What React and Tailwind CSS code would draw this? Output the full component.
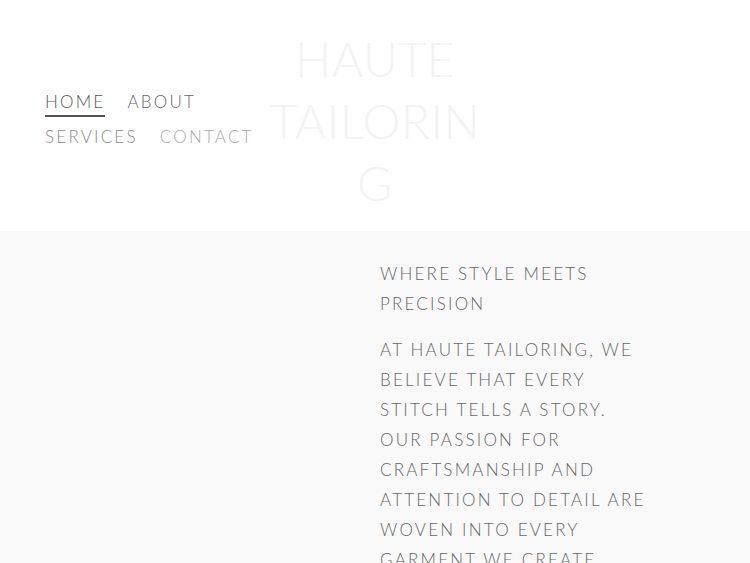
const NAV = [
  { label: 'HOME', color: 'text-[#555]', active: true },
  { label: 'ABOUT', color: 'text-[#666]' },
  { label: 'SERVICES', color: 'text-[#8a8a8a]' },
  { label: 'CONTACT', color: 'text-[#aaa]' },
]

export default function App() {
  return (
    <div className="min-h-[563px] bg-[#f9f9f9] font-['Lato','Liberation_Sans',sans-serif]">
      {/* Header */}
      <header className="grid h-[231px] grid-cols-[1fr_218px_1fr] bg-white">
        <nav className="flex flex-wrap content-center items-start gap-x-[22px] gap-y-[9px] pl-[45px] pt-[11px]">
          {NAV.map((item) => (
            <a
              key={item.label}
              href="#"
              className={`pb-[2px] text-[17px] font-light leading-[22px] tracking-[0.13em] ${item.color} ${item.active ? 'border-b-2 border-[#555]' : 'border-b-2 border-transparent'}`}
            >
              {item.label}
            </a>
          ))}
        </nav>
        <h1 className="pt-[28px] text-center text-[48px] font-light leading-[62px] tracking-[0.01em] text-[#f3f3f3]">
          <span className="block">HAUTE</span>
          <span className="block break-all">TAILORING</span>
        </h1>
        <div />
      </header>

      {/* Intro */}
      <section className="grid grid-cols-2">
        <div />
        <div className="w-[280px] pl-[5px] pt-[28px] text-[17px] font-light leading-[30px] tracking-[0.13em] text-[#666]">
          <h2>WHERE STYLE MEETS PRECISION</h2>
          <p className="mt-[16px]">
            AT HAUTE TAILORING, WE BELIEVE THAT EVERY STITCH TELLS A STORY. OUR PASSION FOR
            CRAFTSMANSHIP AND ATTENTION TO DETAIL ARE WOVEN INTO EVERY GARMENT WE CREATE.
          </p>
        </div>
      </section>
    </div>
  )
}
